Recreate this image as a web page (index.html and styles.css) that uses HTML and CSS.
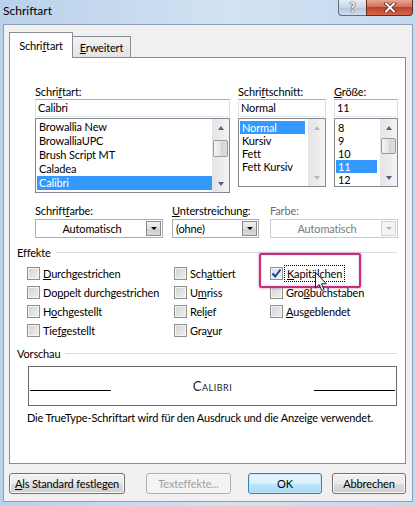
FILE: index.html
```html
<!DOCTYPE html>
<html lang="de">
<head>
    <meta charset="UTF-8">
    <title>Schriftart</title>
    <link rel="stylesheet" href="styles.css">
</head>
<body>
<div class="window">

    <!-- Titelleiste -->
    <div class="titlebar">
        <span class="title">Schriftart</span>
        <div class="caption-btns">
            <span class="btn-help">?</span>
            <span class="btn-close">
                <svg width="14" height="11" viewBox="0 0 14 11">
                    <path d="M3 1.5 L11 9.5 M11 1.5 L3 9.5" stroke="#5a2418" stroke-width="3.6" stroke-linecap="square"/>
                    <path d="M3 1.5 L11 9.5 M11 1.5 L3 9.5" stroke="#fff" stroke-width="2" stroke-linecap="square"/>
                </svg>
            </span>
        </div>
    </div>

    <div class="client">
        <!-- Registerkarten -->
        <div class="tabs">
            <div class="tab active">Schri<u>f</u>tart</div>
            <div class="tab"><u>E</u>rweitert</div>
        </div>

        <div class="panel">
            <!-- Schriftart / Schriftschnitt / Größe -->
            <div class="font-row">
                <div class="col-font">
                    <div class="label">Schri<u>f</u>tart:</div>
                    <div class="textbox">Calibri</div>
                    <div class="listbox">
                        <div class="items">
                            <div>Browallia New</div>
                            <div>BrowalliaUPC</div>
                            <div>Brush Script MT</div>
                            <div>Caladea</div>
                            <div class="selected">Calibri</div>
                        </div>
                        <div class="scrollbar">
                            <div class="arrow up"></div>
                            <div class="track"><div class="thumb thumb-font"></div></div>
                            <div class="arrow down"></div>
                        </div>
                    </div>
                </div>
                <div class="col-style">
                    <div class="label">Schri<u>f</u>tschnitt:</div>
                    <div class="textbox">Normal</div>
                    <div class="listbox short">
                        <div class="items">
                            <div class="selected">Normal</div>
                            <div>Kursiv</div>
                            <div>Fett</div>
                            <div>Fett Kursiv</div>
                        </div>
                        <div class="scrollbar disabled">
                            <div class="arrow up"></div>
                            <div class="track"></div>
                            <div class="arrow down"></div>
                        </div>
                    </div>
                </div>
                <div class="col-size">
                    <div class="label"><u>G</u>röße:</div>
                    <div class="textbox">11</div>
                    <div class="listbox short">
                        <div class="items">
                            <div>8</div>
                            <div>9</div>
                            <div>10</div>
                            <div class="selected">11</div>
                            <div>12</div>
                        </div>
                        <div class="scrollbar">
                            <div class="arrow up"></div>
                            <div class="track"><div class="thumb thumb-size"></div></div>
                            <div class="arrow down"></div>
                        </div>
                    </div>
                </div>
            </div>

            <!-- Farben und Unterstreichung -->
            <div class="color-row">
                <div class="col-color">
                    <div class="label">Schrift<u>f</u>arbe:</div>
                    <div class="dropdown">
                        <span class="dd-text center">Automatisch</span>
                        <span class="dd-btn"></span>
                    </div>
                </div>
                <div class="col-underline">
                    <div class="label"><u>U</u>nterstreichung:</div>
                    <div class="dropdown">
                        <span class="dd-text">(ohne)</span>
                        <span class="dd-btn"></span>
                    </div>
                </div>
                <div class="col-ucolor">
                    <div class="label disabled-text">Farbe:</div>
                    <div class="dropdown disabled">
                        <span class="dd-text center">Automatisch</span>
                        <span class="dd-btn"></span>
                    </div>
                </div>
            </div>

            <!-- Effekte -->
            <div class="group-title"><span>Effekte</span><span class="line"></span></div>
            <div class="checks">
                <div class="check"><span class="box"></span><span><u>D</u>urchgestrichen</span></div>
                <div class="check"><span class="box"></span><span>Sch<u>a</u>ttiert</span></div>
                <div class="check"><span class="box checked"><svg width="11" height="11" viewBox="0 0 11 11"><path d="M1.5 5.5 L4.2 8.5 L9.5 1.5" fill="none" stroke="#1c3f94" stroke-width="2"/></svg></span><span class="focus"><u>K</u>apitälchen</span></div>
                <div class="check"><span class="box"></span><span>Do<u>p</u>pelt durchgestrichen</span></div>
                <div class="check"><span class="box"></span><span>U<u>m</u>riss</span></div>
                <div class="check"><span class="box"></span><span>Gro<u>ß</u>buchstaben</span></div>
                <div class="check"><span class="box"></span><span>H<u>o</u>chgestellt</span></div>
                <div class="check"><span class="box"></span><span>Rel<u>i</u>ef</span></div>
                <div class="check"><span class="box"></span><span><u>A</u>usgeblendet</span></div>
                <div class="check"><span class="box"></span><span>Tie<u>f</u>gestellt</span></div>
                <div class="check"><span class="box"></span><span>Gra<u>v</u>ur</span></div>
            </div>

            <!-- Vorschau -->
            <div class="group-title preview-title"><span>Vorschau</span><span class="line"></span></div>
            <div class="preview">
                <span class="pline"></span>
                <span class="sample">Calibri</span>
                <span class="pline"></span>
            </div>
            <p class="note">Die TrueType-Schriftart wird für den Ausdruck und die Anzeige verwendet.</p>
        </div>

        <!-- Schaltflächen -->
        <div class="buttons">
            <span class="button b-default"><u>A</u>ls Standard festlegen</span>
            <span class="button b-effects disabled">Texteffekte...</span>
            <span class="button b-ok primary">OK</span>
            <span class="button b-cancel">Abbrechen</span>
        </div>
    </div>

    <!-- Markierung und Mauszeiger -->
    <div class="highlight"></div>
    <svg class="cursor" width="13" height="20" viewBox="0 0 13 20">
        <path d="M0.5 0.5 L0.5 16 L4.2 12.6 L6.8 18.5 L9 17.5 L6.5 11.8 L11.3 11.8 Z" fill="#fff" fill-opacity="0.85" stroke="#222" stroke-width="1"/>
    </svg>
</div>
</body>
</html>
```

FILE: styles.css
```css
/* Grundlayout des Dialogs */
* {
    box-sizing: border-box;
}
body {
    margin: 0;
    font-family: Lato, "Liberation Sans", sans-serif;
    font-size: 11px;
    letter-spacing: -0.15px;
    color: #000;
}
u {
    text-decoration: underline;
    text-underline-offset: 1px;
}
.window {
    position: relative;
    width: 416px;
    height: 506px;
    overflow: hidden;
    background: linear-gradient(to right, #b9d1ea, #d2e2f3 55%, #c5d9ee);
}

/* Titelleiste */
.titlebar {
    height: 24px;
    display: flex;
    justify-content: space-between;
}
.title {
    padding: 3px 0 0 3px;
    font-size: 12px;
    letter-spacing: 0;
}
.caption-btns {
    display: flex;
    margin-right: 3px;
}
.btn-help {
    width: 28px;
    height: 16px;
    border: 1px solid #5f6f86;
    border-top: none;
    border-right: none;
    border-radius: 0 0 0 4px;
    background: linear-gradient(#e9eef5, #c9d5e4 50%, #b7c6d9 51%, #cfdbea);
    text-align: center;
    font-weight: bold;
    font-size: 13px;
    line-height: 14px;
    color: #fff;
    text-shadow: 0 0 1px #30445f, 0 0 1px #30445f, 0 0 1px #30445f;
}
.btn-close {
    width: 47px;
    height: 16px;
    display: flex;
    align-items: center;
    justify-content: center;
    border: 1px solid #6a2a1d;
    border-top: none;
    border-radius: 0 0 4px 0;
    background: linear-gradient(#e9a594, #d3705a 45%, #c1412a 50%, #d5664a);
}

/* Fensterinhalt */
.client {
    margin-left: 3px;
    width: 410px;
    height: 478px;
    background: #f0f0f0;
    border: 1px solid #8e9fb5;
    padding: 7px 0 0 5px;
}
.tabs {
    display: flex;
    align-items: flex-end;
    height: 25px;
}
.tab {
    height: 21px;
    width: 58px;
    border: 1px solid #898c95;
    border-bottom: none;
    border-left: none;
    background: linear-gradient(#f3f3f3, #e3e3e3);
    text-align: center;
    line-height: 19px;
    padding-top: 1px;
}
.tab.active {
    position: relative;
    z-index: 2;
    width: 64px;
    height: 26px;
    margin-bottom: -1px;
    border-left: 1px solid #898c95;
    background: #fff;
    line-height: 24px;
}
.panel {
    width: 397px;
    height: 407px;
    background: #fff;
    border: 1px solid #898c95;
}

/* Schriftauswahl */
.font-row {
    display: flex;
    gap: 8px;
    margin: 26px 0 0 25px;
}
.col-font { width: 195px; }
.col-style { width: 88px; }
.col-size { width: 64px; }
.label {
    height: 15px;
    line-height: 15px;
    white-space: nowrap;
}
.textbox {
    height: 18px;
    border: 1px solid #abadb3;
    border-bottom-color: #e3e9ef;
    border-left-color: #e2e3ea;
    border-right-color: #dbdfe6;
    line-height: 16px;
    padding-left: 2px;
}
.listbox {
    display: flex;
    height: 75px;
    margin-top: 1px;
    border: 1px solid #828790;
}
.listbox.short {
    height: 69px;
}
.items {
    flex: 1;
    padding: 1px 0 0 1px;
}
.items div {
    height: 14px;
    line-height: 14px;
    padding-left: 2px;
    white-space: nowrap;
}
.short .items {
    padding: 2px 3px 0 1px;
}
.short .items div {
    height: 13px;
    line-height: 13px;
}
.items .selected {
    background: #3399ff;
    color: #fff;
}

/* Bildlaufleisten */
.scrollbar {
    width: 17px;
    display: flex;
    flex-direction: column;
    background: linear-gradient(to right, #e4e4e4, #f3f3f3);
}
.scrollbar .track {
    flex: 1;
}
.arrow {
    height: 17px;
    display: flex;
    align-items: center;
    justify-content: center;
}
.arrow::after {
    content: "";
    border-left: 3px solid transparent;
    border-right: 3px solid transparent;
}
.arrow.up::after {
    border-bottom: 4px solid #4d6185;
}
.arrow.down::after {
    border-top: 4px solid #4d6185;
}
.disabled .arrow.up::after {
    border-bottom-color: #b3bac5;
}
.disabled .arrow.down::after {
    border-top-color: #b3bac5;
}
.thumb {
    width: 15px;
    margin-left: 1px;
    border: 1px solid #979ca3;
    border-radius: 2px;
    background: linear-gradient(to right, #f4f4f4, #e4e4e4 50%, #d5d5d5 51%, #dcdcdc);
}
.thumb-font {
    margin-top: 4px;
    height: 17px;
}
.thumb-size {
    margin-top: 2px;
    height: 16px;
}

/* Farbe und Unterstreichung */
.color-row {
    display: flex;
    margin: 10px 0 0 25px;
}
.col-color { width: 128px; }
.col-underline { width: 87px; margin-left: 9px; }
.col-ucolor { width: 128px; margin-left: 11px; }
.dropdown {
    display: flex;
    align-items: center;
    height: 19px;
    margin-top: 1px;
    border: 1px solid #abadb3;
    background: #fff;
    padding-right: 1px;
}
.dd-text {
    flex: 1;
    padding-left: 3px;
    white-space: nowrap;
}
.dd-text.center {
    text-align: center;
    padding: 0 0 0 2px;
}
.dd-btn {
    width: 15px;
    height: 15px;
    border: 1px solid #8a8a8a;
    background: linear-gradient(#f2f2f2, #e0e0e0 50%, #cfcfcf 51%, #d8d8d8);
    display: flex;
    align-items: center;
    justify-content: center;
}
.dd-btn::after {
    content: "";
    border-left: 3px solid transparent;
    border-right: 3px solid transparent;
    border-top: 3px solid #000;
}
.dropdown.disabled {
    border-color: #c9ccd1;
}
.dropdown.disabled .dd-text {
    color: #7a7a7a;
}
.dropdown.disabled .dd-btn {
    border-color: #d0d3d8;
    background: #f4f4f4;
}
.dropdown.disabled .dd-btn::after {
    border-top-color: #b5b5b5;
}
.disabled-text {
    color: #6d6d6d;
}

/* Gruppen */
.group-title {
    display: flex;
    align-items: center;
    height: 14px;
    margin: 7px 8px 0 7px;
}
.group-title .line {
    flex: 1;
    height: 1px;
    margin-left: 5px;
    background: #d5dfe5;
}
.preview-title {
    margin-top: 6px;
}
.checks {
    display: grid;
    grid-template-columns: 147px 96px auto;
    grid-auto-rows: 19px;
    margin: 5px 0 0 17px;
}
.check {
    display: flex;
    align-items: center;
    white-space: nowrap;
}
.box {
    width: 13px;
    height: 13px;
    margin-right: 3px;
    border: 1px solid #8e8f8f;
    background: linear-gradient(135deg, #d2d2d2, #f0f0f0);
    box-shadow: inset 0 0 0 1px #f4f4f4;
    display: flex;
    align-items: center;
    justify-content: center;
}
.box.checked {
    background: linear-gradient(135deg, #cbdff1, #f4f8fc);
    border-color: #8e8f8f;
}
.focus {
    outline: 1px dotted #000;
    outline-offset: 1px;
    padding: 0 1px;
}

/* Vorschau */
.preview {
    display: flex;
    align-items: center;
    justify-content: space-between;
    width: 369px;
    height: 40px;
    margin: 6px 0 0 18px;
    padding: 0 1px;
    border: 1px solid #6b6b6b;
}
.pline {
    width: 81px;
    height: 1px;
    margin-top: 9px;
    background: #000;
}
.sample {
    font-variant: small-caps;
    font-size: 13px;
    letter-spacing: 0.5px;
    color: #222;
}
.note {
    margin: 5px 0 0 17px;
    line-height: 14px;
    white-space: nowrap;
}

/* Schaltflächen */
.buttons {
    display: flex;
    margin-top: 9px;
}
.button {
    height: 21px;
    line-height: 19px;
    text-align: center;
    border: 1px solid #707070;
    border-radius: 3px;
    background: linear-gradient(#f2f2f2, #ebebeb 50%, #dddddd 51%, #cfcfcf);
    box-shadow: inset 0 0 0 1px #fcfcfc;
    white-space: nowrap;
}
.b-default { width: 116px; margin-left: 0; }
.b-effects { width: 85px; margin-left: 21px; }
.b-ok { width: 74px; margin-left: 17px; }
.b-cancel { width: 74px; margin-left: 10px; }
.button.disabled {
    border-color: #adb2b5;
    background: #f4f4f4;
    box-shadow: none;
    color: #a0a0a0;
}
.button.primary {
    border-color: #3c7fb1;
    background: linear-gradient(#eaf6fd, #d9f0fc 50%, #bee6fd 51%, #a7d9f5);
    box-shadow: inset 0 0 0 1px #c4e8fb;
}

/* Markierung über dem Dialog */
.highlight {
    position: absolute;
    left: 259px;
    top: 253px;
    width: 102px;
    height: 35px;
    border: 2px solid #c3307b;
    border-radius: 2px;
    box-shadow: 0 0 3px rgba(195, 48, 123, 0.6), inset 0 0 2px rgba(195, 48, 123, 0.4);
}
.cursor {
    position: absolute;
    left: 315px;
    top: 272px;
}
```
